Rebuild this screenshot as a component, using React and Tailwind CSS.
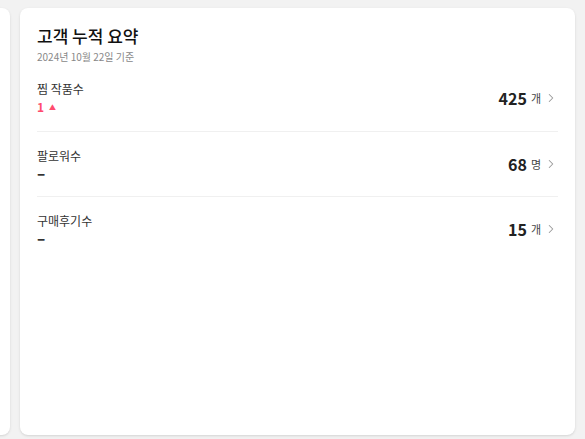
import { ChevronRight } from 'lucide-react';

const rows = [
  { label: '찜 작품수', value: '425', unit: '개', diff: '1', up: true },
  { label: '팔로워수', value: '68', unit: '명' },
  { label: '구매후기수', value: '15', unit: '개' },
];

const SummaryRow = ({ row, last }) => (
  <div className={`flex items-center justify-between ${last ? '' : 'border-b border-[#f0f0f0]'} py-[15px]`}>
    <div className="flex flex-col">
      <span className="text-[12px] leading-[18px] text-[#333]">{row.label}</span>
      {row.diff ? (
        <span className="flex items-center gap-[5px] text-[12px] leading-[18px] font-semibold text-[#ff4b6e]">
          {row.diff}
          <span className="text-[7px]">▲</span>
        </span>
      ) : (
        <span className="text-[15px] leading-[16px] font-black text-[#333]">–</span>
      )}
    </div>
    <div className="flex items-center">
      <span className="text-[16px] font-bold text-[#222]">{row.value}</span>
      <span className="ml-[4px] text-[11px] text-[#444]">{row.unit}</span>
      <ChevronRight className="ml-[3px] w-[14px] h-[14px] text-[#999]" strokeWidth={1.75} />
    </div>
  </div>
);

export default function App() {
  return (
    <div
      className="w-[585px] h-[439px] bg-[#f2f2f2] flex gap-[10px] pt-[8px] pb-[4px] overflow-hidden"
      style={{ fontFamily: '"Noto Sans CJK KR", "Noto Sans", sans-serif' }}
    >
      <div className="w-[20px] -ml-[10px] bg-white rounded-lg shadow-sm" />
      <div className="w-[555px] bg-white rounded-lg shadow-sm pl-[17px] pr-[17px] pt-[15px]">
        <h2 className="text-[17px] leading-[26px] font-medium text-[#111]">고객 누적 요약</h2>
        <p className="text-[10px] leading-[16px] text-[#888]">2024년 10월 22일 기준</p>
        <div>
          {rows.map((row, i) => (
            <SummaryRow key={row.label} row={row} last={i === rows.length - 1} />
          ))}
        </div>
      </div>
    </div>
  );
}
